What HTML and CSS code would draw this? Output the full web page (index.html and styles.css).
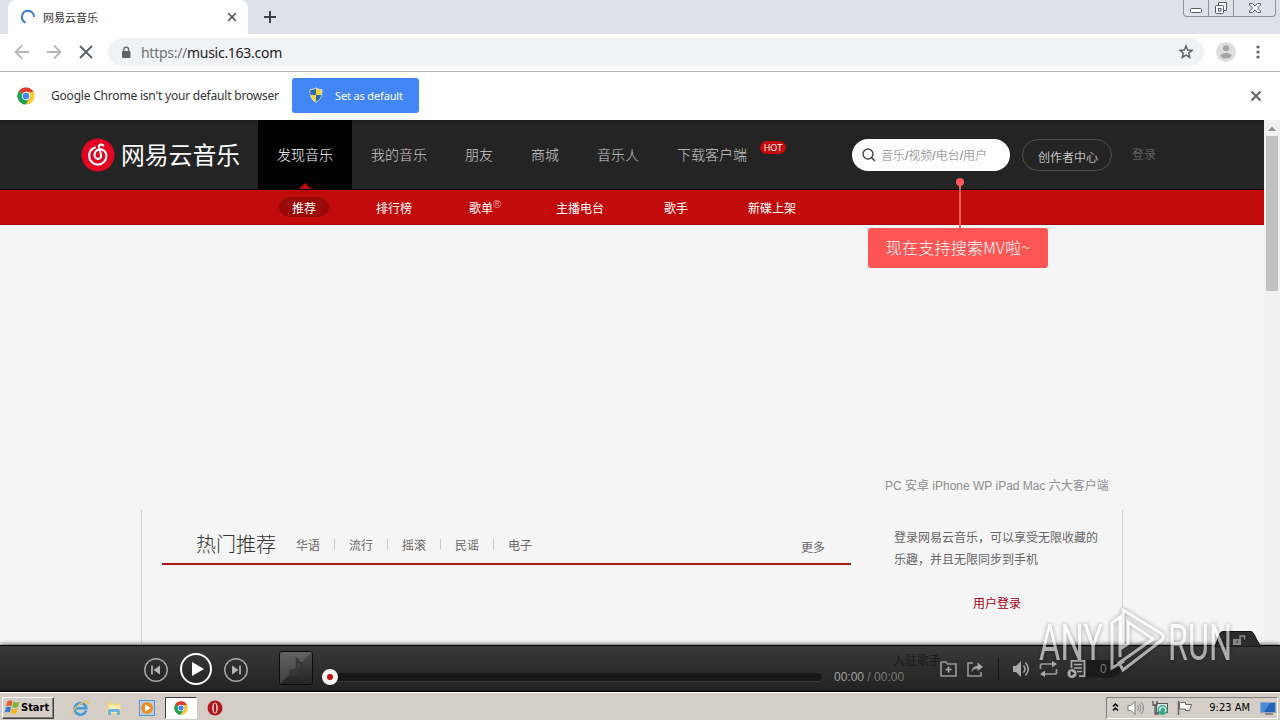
FILE: index.html
```html
<!DOCTYPE html>
<html lang="zh-CN">
<head>
  <meta charset="UTF-8">
  <title>网易云音乐</title>
  <link rel="stylesheet" href="styles.css">
</head>
<body>
  <svg class="defs" width="0" height="0">
    <symbol id="chrome" viewBox="0 0 18 18">
      <circle cx="9" cy="9" r="8.6" fill="#fbc72c"/>
      <path d="M9 9 1.6 4.6A8.6 8.6 0 0 1 16.6 5H9z" fill="#dd3b2f"/>
      <path d="M9 9 1.6 4.6A8.6 8.6 0 0 0 8.6 17.6L12.5 11z" fill="#1da25a"/>
      <circle cx="9" cy="9" r="4.2" fill="#fff"/>
      <circle cx="9" cy="9" r="3.3" fill="#4285f4"/>
    </symbol>
  </svg>

  <div class="tabstrip">
    <div class="tab">
      <svg class="spinner" width="16" height="16" viewBox="0 0 16 16"><path d="M5.500 13.600A6.200 6.200 0 0 1 8 1.800 6.200 6.200 0 0 1 14.200 8" fill="none" stroke="#3b78e0" stroke-width="2"/></svg>
      <span class="tab-title">网易云音乐</span>
      <svg width="10" height="10" viewBox="0 0 10 10"><path d="M1.2 1.2l7.6 7.6M8.8 1.2L1.2 8.8" stroke="#5f6368" stroke-width="1.8"/></svg>
    </div>
    <svg class="new-tab" width="12" height="12" viewBox="0 0 12 12"><path d="M6 0v12M0 6h12" stroke="#3c4043" stroke-width="2"/></svg>
    <div class="win-buttons">
      <div class="win-btn"><svg width="24" height="16"><rect x="6.5" y="8.500" width="11" height="4" rx="1" fill="#fff" stroke="#555b66"/></svg></div>
      <div class="win-btn"><svg width="24" height="16"><path d="M9.500 5V2.500h8v8h-3" fill="#fff" stroke="#555b66"/><rect x="6.500" y="5.500" width="8" height="8" rx="1" fill="#fff" stroke="#555b66"/><rect x="9.500" y="8.500" width="2.500" height="2.500" fill="none" stroke="#555b66"/></svg></div>
      <div class="win-btn wide"><svg width="41" height="16"><path d="M15.500 3.500h3l2.500 2.500 2.500-2.500h3v1.500l-3 3 3 3v1.500h-3l-2.500-2.500-2.500 2.500h-3v-1.500l3-3-3-3z" fill="#fff" stroke="#555b66"/></svg></div>
    </div>
  </div>

  <div class="toolbar">
    <svg width="16" height="16" viewBox="0 0 16 16"><path d="M15 8H2M8 1.500L1.500 8 8 14.500" fill="none" stroke="#b4b6b9" stroke-width="1.8"/></svg>
    <svg width="16" height="16" viewBox="0 0 16 16"><path d="M1 8h13M8 1.500L14.500 8 8 14.500" fill="none" stroke="#b4b6b9" stroke-width="1.8"/></svg>
    <svg width="16" height="16" viewBox="0 0 16 16"><path d="M2 2l12 12M14 2L2 14" stroke="#5f6368" stroke-width="2"/></svg>
    <div class="omnibox">
      <svg width="10" height="13" viewBox="0 0 10 13"><rect x="1" y="5" width="8.500" height="7" rx="1" fill="#5f6368"/><path d="M2.800 5V3.500a2.400 2.400 0 0 1 4.800 0V5" fill="none" stroke="#5f6368" stroke-width="1.400"/></svg>
      <span class="url"><span class="scheme">https://</span>music.163.com</span>
      <svg width="16" height="16" viewBox="0 0 16 16"><path d="M8 2l1.700 4 4.300.3-3.300 2.900 1 4.300L8 11.200l-3.700 2.300 1-4.300L2 6.300 6.300 6z" fill="none" stroke="#5f6368" stroke-width="1.500"/></svg>
    </div>
    <svg class="avatar" width="20" height="20" viewBox="0 0 20 20"><circle cx="10" cy="10" r="10" fill="#dedede"/><circle cx="10" cy="6.300" r="3" fill="#a3a3a3"/><ellipse cx="10" cy="13.800" rx="5.500" ry="2.800" fill="#a3a3a3"/></svg>
    <svg class="dots" width="4" height="14" viewBox="0 0 4 14"><circle cx="2" cy="2" r="1.600" fill="#5f6368"/><circle cx="2" cy="7" r="1.600" fill="#5f6368"/><circle cx="2" cy="12" r="1.600" fill="#5f6368"/></svg>
  </div>

  <div class="infobar">
    <svg width="18" height="18"><use href="#chrome"/></svg>
    <span class="info-text">Google Chrome isn't your default browser</span>
    <button class="default-btn">
      <svg width="14" height="16" viewBox="0 0 14 16"><path d="M7 .8c2 1.400 4 1.800 6 1.800 0 6-1 10-6 12.600C2 12.600 1 8.600 1 2.600c2 0 4-.4 6-1.800z" fill="#f6d43b" stroke="#d8dde6"/><path d="M7 1.500v6.500H1.600C1.300 6.500 1.200 5 1.300 3 3.300 3 5 2.500 7 1.500zM7 8h5.400c-.7 3-2.200 5.200-5.400 6.700z" fill="#2d6ab5"/></svg>
      <span>Set as default</span>
    </button>
    <svg class="info-close" width="12" height="12" viewBox="0 0 12 12"><path d="M1.500 1.500l9 9M10.500 1.500l-9 9" stroke="#5f6368" stroke-width="2"/></svg>
  </div>

  <div class="viewport">
    <div class="page">
      <div class="header">
        <div class="logo">
          <svg width="34" height="34" viewBox="0 0 34 34"><circle cx="17" cy="17" r="16.500" fill="#e20521"/><path d="M14 9.500A8.800 8.800 0 0 0 8.200 18a8.600 8.600 0 0 0 17.200 0c0-4-3-7-6.700-6.600-3.200.3-5.400 3-5.200 5.800.2 2.500 2 3.900 3.800 3.700 2.200-.2 3.200-2 2.700-4.200l-2-7.700c-.5-2.200 2.200-3.300 4.300-1.500" fill="none" stroke="#fff" stroke-width="2.100" stroke-linecap="round"/></svg>
          <span class="logo-text">网易云音乐</span>
        </div>
        <div class="nav">
          <a class="nav-item active">发现音乐</a>
          <a class="nav-item">我的音乐</a>
          <a class="nav-item">朋友</a>
          <a class="nav-item">商城</a>
          <a class="nav-item">音乐人</a>
          <a class="nav-item">下载客户端<span class="hot">HOT</span></a>
        </div>
        <div class="search">
          <svg width="14" height="14" viewBox="0 0 14 14"><circle cx="6" cy="6" r="5" fill="none" stroke="#444" stroke-width="1.400"/><path d="M9.600 9.600L13 13" stroke="#444" stroke-width="1.600"/></svg>
          <span>音乐/视频/电台/用户</span>
          <div class="tip-line"></div>
          <div class="tip">现在支持搜索MV啦~</div>
        </div>
        <a class="creator">创作者中心</a>
        <a class="login">登录</a>
      </div>

      <div class="subnav">
        <a class="sub on">推荐</a>
        <a class="sub">排行榜</a>
        <a class="sub songlist">歌单<span class="reg">®</span></a>
        <a class="sub">主播电台</a>
        <a class="sub">歌手</a>
        <a class="sub">新碟上架</a>
      </div>

      <div class="banner">
        <p class="clients">PC 安卓 iPhone WP iPad Mac 六大客户端</p>
      </div>

      <div class="content">
        <div class="main">
          <div class="hot-head">
            <h2>热门推荐</h2>
            <div class="tags">
              <a>华语</a><i></i><a>流行</a><i></i><a>摇滚</a><i></i><a>民谣</a><i></i><a>电子</a>
            </div>
            <a class="more">更多</a>
          </div>
        </div>
        <div class="side">
          <p>登录网易云音乐，可以享受无限收藏的乐趣，并且无限同步到手机</p>
          <a class="side-login">用户登录</a>
        </div>
      </div>
    </div>

    <div class="scrollbar">
      <svg width="16" height="16" viewBox="0 0 16 16"><path d="M4 11l4-4.500 4 4.500z" fill="#929292"/></svg>
      <div class="thumb"></div>
    </div>

    <div class="player">
      <div class="lock-tab">
        <svg width="50" height="16" viewBox="0 0 50 16"><path d="M0 16C5 15 4 1 10 .5h28C42 1 44 14 50 16z" fill="#2d2d2d" stroke="#111"/><rect x="20" y="8" width="8" height="6" fill="#8a8a8a"/><path d="M27 8V5h4.500v3.500" fill="none" stroke="#8a8a8a" stroke-width="1.400"/><path d="M24 9.500v2.500" stroke="#222"/></svg>
      </div>
      <span class="ghost">入驻歌手</span>
      <svg class="prev" width="24" height="24" viewBox="0 0 24 24"><circle cx="12" cy="12" r="11.200" fill="none" stroke="#a5a5a5" stroke-width="1.500"/><path d="M8 7.500v9" stroke="#b5b5b5" stroke-width="1.700"/><path d="M16 7.500v9L9.500 12z" fill="#b5b5b5"/></svg>
      <svg class="play" width="32" height="32" viewBox="0 0 32 32"><circle cx="16" cy="16" r="15" fill="none" stroke="#fff" stroke-width="2"/><path d="M12 9l12 7-12 7z" fill="#fff"/></svg>
      <svg class="next" width="24" height="24" viewBox="0 0 24 24"><circle cx="12" cy="12" r="11.200" fill="none" stroke="#a5a5a5" stroke-width="1.500"/><path d="M16 7.500v9" stroke="#b5b5b5" stroke-width="1.700"/><path d="M8 7.500v9l6.500-4.500z" fill="#b5b5b5"/></svg>
      <div class="cover"><svg width="32" height="32" viewBox="0 0 32 32"><path d="M0 0h32L0 32z" fill="#fff" opacity=".13"/><path d="M17 6v14M17 7c0 4 6 3 5 9" fill="none" stroke="#383838" stroke-width="2.500"/><ellipse cx="13" cy="20.500" rx="4.500" ry="3.500" fill="#383838"/></svg></div>
      <div class="progress"><div class="knob"></div></div>
      <span class="time"><em>00:00</em> / 00:00</span>
      <svg class="fav" width="17" height="16" viewBox="0 0 17 16"><path d="M1 1h5l1.500 2H16v12H1z" fill="none" stroke="#999" stroke-width="1.600"/><path d="M8.500 5.500v6M5.500 8.500h6" stroke="#aaa" stroke-width="1.600"/></svg>
      <svg class="share" width="17" height="16" viewBox="0 0 17 16"><path d="M6 2H1v13h13v-4" fill="none" stroke="#999" stroke-width="1.600"/><path d="M4.500 11C5 7 7.500 5 10.500 5V1.500L16 6l-5.500 4V7.500C8 7.500 6 8.500 4.500 11z" fill="#aaa"/></svg>
      <div class="divider"></div>
      <svg class="vol" width="18" height="18" viewBox="0 0 18 18"><path d="M1 6h3l5-5v16l-5-5H1z" fill="#aaa"/><path d="M11.500 5.500q3 3.500 0 7M13.500 2.500q5.500 6.500 0 13" fill="none" stroke="#aaa" stroke-width="1.500"/></svg>
      <svg class="loop" width="19" height="16" viewBox="0 0 19 16"><path d="M1.500 8V4q0-1 1-1H15M17.500 8v4q0 1-1 1H4" fill="none" stroke="#999" stroke-width="1.700"/><path d="M13 0l5 3-5 3.500zM6 9.500L1 13l5 3z" fill="#aaa"/></svg>
      <div class="list">
        <svg width="20" height="20" viewBox="0 0 20 20"><path d="M4.500 9V1.800h13v15.400H12" fill="none" stroke="#aaa" stroke-width="1.700"/><path d="M7 5.500h8M7 9h8M10 12.500h5" stroke="#aaa" stroke-width="1.500"/><circle cx="5" cy="14.500" r="4.600" fill="#aaa"/><path d="M3.700 12l4 2.500-4 2.500z" fill="#222"/></svg>
        <span>0</span>
      </div>
    </div>
  </div>

  <div class="taskbar">
    <div class="start">
      <svg width="17" height="16" viewBox="0 0 15 14"><path d="M3 2q2.500-1.500 4.500 0L6.500 6.500Q4.500 5 2 6.500z" fill="#e4572b"/><path d="M8.300 2.300q2.500 1.500 5.200 0L12.300 7Q10 8.400 7.300 7z" fill="#7ab530"/><path d="M1.700 7.500q2.500-1.500 4.500 0L5 12Q3 10.500.5 12z" fill="#3a7bd0"/><path d="M7 8q2.500 1.500 5 0L11 12.500Q8.500 14 6 12.500z" fill="#f3b820"/></svg>
      <span>Start</span>
    </div>
    <svg class="ie" width="18" height="18" viewBox="0 0 18 18"><path d="M15 11.500A5.800 5.800 0 1 1 15.200 9.200H4.500" fill="none" stroke="#3e9cdc" stroke-width="2.600"/><path d="M1 15.500C1 11 10 2 17 2.300c.8 1-.3 2.700-1 3.500" fill="none" stroke="#ecc24b" stroke-width="1.300"/></svg>
    <svg class="folder" width="18" height="18" viewBox="0 0 18 18"><path d="M2 4l5-1 1 1.500h8V15H2z" fill="#f2d67c"/><path d="M4 6h11v8H4z" fill="#f9ecb4"/><path d="M3 16v-4q0-2 2-2h8q2 0 2 2v4h-3v-3H6v3z" fill="#6db5df"/></svg>
    <svg class="wmp" width="16" height="16" viewBox="0 0 16 16"><rect x=".5" y=".5" width="15" height="15" fill="#b3d3ef" stroke="#5d91c8"/><circle cx="8" cy="8" r="6" fill="#f18b20"/><path d="M6 4.500l6 3.500-6 3.500z" fill="#fff"/></svg>
    <div class="task-on"><svg width="14" height="14"><use href="#chrome"/></svg></div>
    <svg class="opera" width="16" height="16" viewBox="0 0 16 16"><circle cx="8" cy="8" r="7.500" fill="#b3161d"/><ellipse cx="8" cy="8" rx="2.800" ry="5.500" fill="#f0dad7"/><ellipse cx="8" cy="8" rx="1.300" ry="4.800" fill="#a3161b"/></svg>
    <div class="tray">
      <svg width="7" height="12" viewBox="0 0 7 12"><path d="M1 4.500L3.500 2 6 4.500M1 8.500L3.500 6 6 8.500" fill="none" stroke="#000" stroke-width="1.500"/></svg>
      <svg width="17" height="16" viewBox="0 0 17 16"><path d="M1 5.500h3l4-4v13l-4-4H1z" fill="#fff" stroke="#777"/><path d="M10.500 5q2 3 0 6M12.500 3.500q3 4.500 0 9M14.500 2q4 6 0 12" fill="none" stroke="#8a8a8a"/></svg>
      <svg width="16" height="16" viewBox="0 0 16 16"><rect x="4.500" y="3.500" width="11" height="9" fill="#dbe8ee" stroke="#555"/><path d="M1 1v4h4V1M3 5v9h4" fill="none" stroke="#555" stroke-width="1.300"/><circle cx="10.500" cy="10" r="5" fill="#3ca58d"/><path d="M8 11a3 3 0 1 1 5 1" fill="none" stroke="#d7eee8" stroke-width="1.400"/></svg>
      <svg width="17" height="16" viewBox="0 0 17 16"><path d="M2.500 1v14" stroke="#666" stroke-width="1.500"/><path d="M3.500 2.500h6v2h6l-2 6h-4v-1.500h-6z" fill="#fff" stroke="#666"/></svg>
      <span class="clock">9:23 AM</span>
      <svg width="16" height="14" viewBox="0 0 16 14"><rect x=".5" y="1.500" width="15" height="10" fill="#2563b8" stroke="#8fa5c0"/><path d="M1 2h9L4 11H1z" fill="#4b8bdb"/><path d="M5 13h8" stroke="#444"/></svg>
    </div>
  </div>

  <svg class="watermark" width="200" height="70" viewBox="0 0 200 70">
    <text x="3" y="54" textLength="64" lengthAdjust="spacingAndGlyphs">ANY</text>
    <path d="M88 55L76 62V17l8-6v40M87 41V4l39 24q3 3 0 6L87 64l-4-7 34-24-25-17v22z"/>
    <text x="132" y="54" textLength="64" lengthAdjust="spacingAndGlyphs">RUN</text>
  </svg>
</body>
</html>
```
FILE: styles.css
```css
* {
  box-sizing: border-box;
  margin: 0;
  padding: 0;
}

body {
  position: relative;
  display: flex;
  flex-direction: column;
  width: 1280px;
  height: 720px;
  overflow: hidden;
  font-family: "Liberation Sans", "Noto Sans CJK SC", sans-serif;
  font-size: 12px;
  color: #333;
  background: #fff;
}

svg {
  display: block;
  flex: none;
}

.defs {
  position: absolute;
}

/* browser window */
.tabstrip {
  display: flex;
  height: 34px;
  background: #dee1e9;
}

.tab {
  display: flex;
  align-items: center;
  width: 240px;
  margin-left: 8px;
  padding: 0 11px 0 12px;
  background: #fff;
  border-radius: 8px 8px 0 0;
}

.tab-title {
  flex: 1;
  margin: -1px 0 0 7px;
  font-size: 11px;
}

.new-tab {
  margin: 11px 0 0 16px;
}

.win-buttons {
  display: flex;
  height: 17px;
  margin-left: auto;
  margin-right: 4px;
  border: 1px solid #8d929c;
  border-top: none;
  border-radius: 0 0 4px 4px;
}

.win-btn + .win-btn {
  border-left: 1px solid #8d929c;
}

.toolbar {
  display: flex;
  align-items: center;
  height: 38px;
  padding: 0 20px 1px 14px;
  gap: 16px;
  border-bottom: 1px solid #b5b5b5;
}

.omnibox {
  display: flex;
  align-items: center;
  flex: 1;
  height: 28px;
  margin-left: -2px;
  padding: 0 10px 0 13px;
  border-radius: 14px;
  background: #f0f2f5;
}

.url {
  flex: 1;
  margin-left: 10px;
  font: 14px "Noto Sans", sans-serif;
  letter-spacing: -0.28px;
  color: #222;
}

.scheme {
  color: #6d7278;
}

.avatar {
  margin-left: -4px;
}

.dots {
  margin-left: 4px;
}

.infobar {
  display: flex;
  align-items: center;
  height: 48px;
  padding: 0 18px 0 17px;
  font-family: "Noto Sans", sans-serif;
}

.info-text {
  width: 241px;
  margin: -2px 0 0 16px;
  font-size: 12px;
  letter-spacing: -0.2px;
  white-space: nowrap;
}

.default-btn {
  display: flex;
  align-items: center;
  width: 127px;
  height: 35px;
  margin-top: -1px;
  padding: 0 0 1px 17px;
  gap: 12px;
  border: none;
  border-radius: 3px;
  background: #4285f4;
  color: #fff;
  font: 11px "Noto Sans", sans-serif;
  letter-spacing: -0.15px;
  white-space: nowrap;
}

.info-close {
  margin-left: auto;
}

.viewport {
  position: relative;
  display: flex;
  height: 572px;
  overflow: hidden;
  background: #f5f5f5;
}

.page {
  width: 1264px;
}

/* site header */
.header {
  display: flex;
  height: 70px;
  padding-left: 81px;
  background: linear-gradient(#1b1b1b, #242424 5px);
  border-bottom: 1px solid #000;
}

.logo {
  display: flex;
  align-items: center;
  width: 177px;
}

.logo-text {
  margin: 3px 0 0 6px;
  font-size: 23.8px;
  font-weight: 400;
  line-height: 30px;
  color: #fff;
  white-space: nowrap;
}

.nav {
  display: flex;
  width: 594px;
}

.nav-item {
  position: relative;
  padding: 0 19px;
  font-size: 14px;
  font-weight: 300;
  line-height: 70px;
  color: #ccc;
  white-space: nowrap;
}

.nav-item.active {
  background: #000;
  color: #fff;
}

.nav-item.active::after {
  content: "";
  position: absolute;
  left: 41px;
  bottom: 0;
  border: 6px solid transparent;
  border-top: none;
  border-bottom-color: #c20c0c;
}

.hot {
  position: absolute;
  top: 21px;
  left: 102px;
  width: 26px;
  height: 13px;
  border-radius: 7px;
  background: #c20c0c;
  color: #fff;
  font: 9px/13px "Open Sans", sans-serif;
  text-align: center;
}

.search {
  position: relative;
  display: flex;
  align-items: center;
  width: 158px;
  height: 32px;
  margin-top: 19px;
  padding-left: 10px;
  gap: 5px;
  border-radius: 16px;
  background: #fff;
  color: #777;
  font-weight: 300;
  white-space: nowrap;
}

.search > span {
  margin-top: -1px;
}

.tip-line {
  position: absolute;
  top: 43px;
  left: 107px;
  width: 2px;
  height: 46px;
  background: #ff5a5a;
}

.tip-line::before {
  content: "";
  position: absolute;
  top: -4px;
  left: -3px;
  width: 8px;
  height: 8px;
  border-radius: 50%;
  background: #ff5a5a;
}

.tip {
  position: absolute;
  top: 89px;
  left: 16px;
  width: 180px;
  height: 40px;
  border-radius: 3px;
  background: #ff5655;
  color: #fff;
  font-family: "Noto Sans CJK SC", sans-serif;
  font-size: 16px;
  letter-spacing: 0.25px;
  line-height: 39px;
  text-align: center;
}

.creator {
  width: 90px;
  height: 32px;
  margin: 19px 0 0 12px;
  padding-left: 2px;
  border: 1px solid #4f4f4f;
  border-radius: 16px;
  color: #fff;
  font-weight: 300;
  line-height: 36px;
  text-align: center;
}

.login {
  margin-left: 20px;
  color: #787878;
  font-weight: 300;
  line-height: 70px;
}

.subnav {
  display: flex;
  align-items: center;
  height: 35px;
  padding-left: 279px;
  gap: 34px;
  background: #c20c0c;
  border-bottom: 1px solid #a40011;
}

.sub {
  height: 20px;
  padding: 0 13px;
  border-radius: 10px;
  color: #fff;
  line-height: 24px;
}

.sub.on {
  background: #9b0909;
}

.songlist {
  display: flex;
  margin: 0 -6px 0 -3px;
}

.reg {
  width: 9px;
  margin-top: -5px;
  font-size: 11px;
  color: #f0a0a0;
}

.banner {
  height: 285px;
  padding: 250px 0 0 885px;
}

.clients {
  line-height: 22px;
  color: #8d8d8d;
  white-space: nowrap;
}

.content {
  display: flex;
  width: 982px;
  height: 200px;
  margin: 0 auto;
  border: 1px solid #d3d3d3;
  border-top: none;
}

.main {
  width: 729px;
  padding: 20px 20px 0;
}

.hot-head {
  display: flex;
  align-items: center;
  height: 35px;
  padding: 0 26px 4px 34px;
  border-bottom: 2px solid #a61b17;
}

.hot-head h2 {
  font-size: 20px;
  font-weight: 300;
  line-height: 28px;
}

.tags {
  display: flex;
  align-items: center;
  flex: 1;
  margin-left: 20px;
  color: #666;
}

.tags i {
  width: 1px;
  height: 11px;
  margin: 0 14px;
  background: #ccc;
}

.more {
  margin-top: 4px;
  color: #666;
}

.side {
  width: 251px;
  padding: 17px 0 0 23px;
  color: #666;
  line-height: 22px;
}

.side p {
  width: 206px;
}

.side-login {
  display: block;
  margin: 22px 0 0 79px;
  color: #a40011;
}

.scrollbar {
  width: 16px;
  background: #f1f1f1;
}

.thumb {
  width: 12px;
  height: 155px;
  margin: 0 2px;
  background: #c1c1c1;
}

/* play bar */
.player {
  position: absolute;
  left: 0;
  bottom: 0;
  display: flex;
  align-items: center;
  width: 1280px;
  height: 47px;
  padding: 1px 0 0 144px;
  background: linear-gradient(#393939, #222);
  border-top: 1px solid #000;
  border-bottom: 1px solid #000;
  box-shadow: 0 -1px 4px rgba(0, 0, 0, 0.6);
}

.lock-tab {
  position: absolute;
  top: -15px;
  right: 17px;
}

.ghost {
  position: absolute;
  left: 893px;
  top: 5px;
  color: #1c1c1c;
}

.prev,
.next {
  margin-top: 2px;
}

.play {
  margin: 0 12px;
}

.cover {
  width: 34px;
  height: 34px;
  margin: -2px 17px 0 31px;
  border: 1px solid #0c0c0c;
  border-radius: 3px;
  background: linear-gradient(#4c4c4c, #242424);
}

.progress {
  position: relative;
  width: 492px;
  height: 9px;
  margin-top: 17px;
  border-radius: 5px;
  background: #171717;
  border-bottom: 1px solid #3b3b3b;
}

.knob {
  position: absolute;
  left: -8px;
  top: -4px;
  width: 16px;
  height: 16px;
  border: 5px solid #f4f4f4;
  border-radius: 50%;
  background: #c20c0c;
}

.time {
  width: 72px;
  margin: 16px 0 0 12px;
  color: #797979;
  white-space: nowrap;
}

.time em {
  font-style: normal;
  color: #a1a1a1;
}

.fav {
  margin-left: 34px;
}

.share {
  margin-left: 10px;
}

.divider {
  width: 1px;
  height: 22px;
  margin: 0 13px 0 14px;
  background: #161616;
}

.loop {
  margin-left: 9px;
}

.list {
  display: flex;
  align-items: center;
  width: 54px;
  height: 18px;
  margin-left: 9px;
  border-radius: 0 9px 9px 0;
  background: linear-gradient(90deg, transparent 19px, #1b1b1b 19px);
  color: #777;
}

.list span {
  margin-left: 13px;
}

/* windows taskbar */
.taskbar {
  display: flex;
  align-items: center;
  height: 28px;
  padding: 2px 0 0 2px;
  background: #d4cec7;
  border-top: 1px solid #fff;
}

.start {
  display: flex;
  align-items: center;
  width: 52px;
  height: 22px;
  padding: 0 0 1px 1px;
  border: 1px solid;
  border-color: #fff #404040 #404040 #fff;
  box-shadow: inset -1px -1px #808080;
  font: bold 11px "DejaVu Sans Condensed", "DejaVu Sans", sans-serif;
  color: #000;
}

.ie {
  margin-left: 17px;
}

.folder,
.wmp {
  margin-left: 16px;
}

.task-on {
  display: flex;
  align-items: center;
  justify-content: center;
  width: 32px;
  height: 22px;
  margin-left: 10px;
  border: 1px solid;
  border-color: #404040 #fff #fff #404040;
  background: #fff;
}

.opera {
  margin-left: 10px;
}

.tray {
  display: flex;
  align-items: center;
  width: 172px;
  height: 22px;
  margin: 0 2px 0 auto;
  padding: 0 1px 0 5px;
  gap: 8px;
  border: 1px solid;
  border-color: #808080 #fff #fff #808080;
}

.clock {
  margin: 0 2px 0 auto;
  font: 11px "DejaVu Sans Condensed", sans-serif;
  color: #000;
  white-space: nowrap;
}

.watermark {
  position: absolute;
  left: 1036px;
  top: 606px;
  opacity: 0.6;
  filter: drop-shadow(0 0 2px rgba(0, 0, 0, 0.6));
}

.watermark text {
  font: 400 50px Roboto, sans-serif;
  fill: #fff;
}

.watermark path {
  fill: none;
  stroke: #fff;
  stroke-width: 3;
}
```
